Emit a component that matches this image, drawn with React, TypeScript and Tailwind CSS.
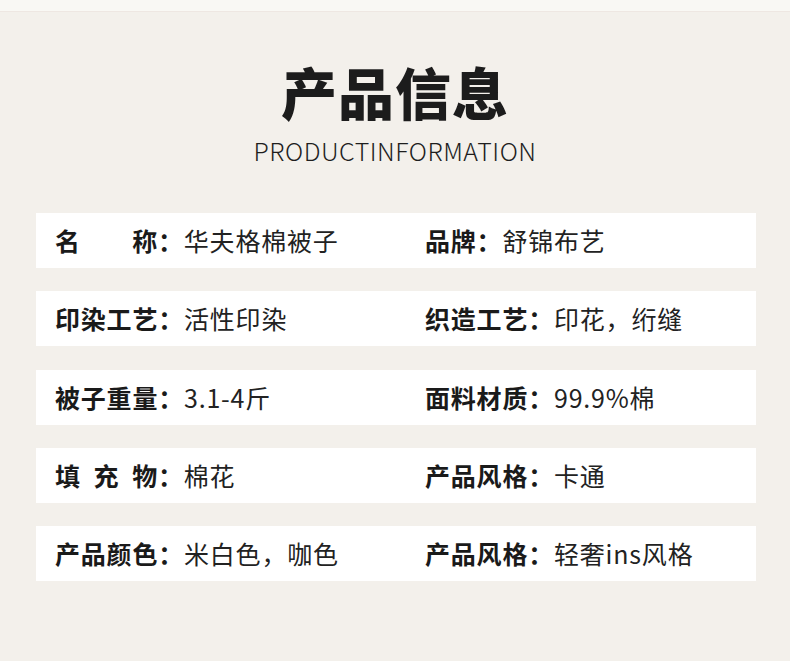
import React from "react";

type Item = { label: string[]; value: string };

const rows: [Item, Item][] = [
  [
    { label: ["名", "称"], value: "华夫格棉被子" },
    { label: ["品牌"], value: "舒锦布艺" },
  ],
  [
    { label: ["印染工艺"], value: "活性印染" },
    { label: ["织造工艺"], value: "印花，绗缝" },
  ],
  [
    { label: ["被子重量"], value: "3.1-4斤" },
    { label: ["面料材质"], value: "99.9%棉" },
  ],
  [
    { label: ["填", "充", "物"], value: "棉花" },
    { label: ["产品风格"], value: "卡通" },
  ],
  [
    { label: ["产品颜色"], value: "米白色，咖色" },
    { label: ["产品风格"], value: "轻奢ins风格" },
  ],
];

function Cell({ item }: { item: Item }) {
  const spaced = item.label.length > 1;
  return (
    <div className="flex items-center text-[25px] tracking-[0.8px] leading-none">
      {spaced ? (
        <span className="flex w-[103px] justify-between font-bold text-[#1a1a1a]">
          {item.label.map((c) => (
            <span key={c}>{c}</span>
          ))}
        </span>
      ) : (
        <span className="font-bold text-[#1a1a1a]">{item.label[0]}</span>
      )}
      <span className="font-bold text-[#1a1a1a]">：</span>
      <span className="text-[#222222]">{item.value}</span>
    </div>
  );
}

export default function App() {
  return (
    <div
      className="w-[790px] h-[661px] bg-[#f3f0eb] overflow-hidden"
      style={{ fontFamily: '"Noto Sans CJK SC", "Noto Sans", sans-serif' }}
    >
      <div className="h-[11px] bg-[#f9f8f4] border-b border-[#eee7e2] box-content" />
      <div className="flex flex-col items-center">
        <h1 className="mt-[51px] text-[56px] leading-none font-black text-[#1c1c1c] tracking-[1px]">
          产品信息
        </h1>
        <div className="mt-[19px] text-[25px] leading-none font-light text-[#1e1e1e] tracking-[0.5px]">
          PRODUCTINFORMATION
        </div>
      </div>
      <div className="mt-[50px] ml-[36px] w-[720px] flex flex-col gap-[23.25px]">
        {rows.map((r, i) => (
          <div key={i} className="grid h-[55px] grid-cols-[370px_1fr] bg-white">
            <div className="flex items-center pl-[19px]">
              <Cell item={r[0]} />
            </div>
            <div className="flex items-center pl-[19px]">
              <Cell item={r[1]} />
            </div>
          </div>
        ))}
      </div>
    </div>
  );
}
